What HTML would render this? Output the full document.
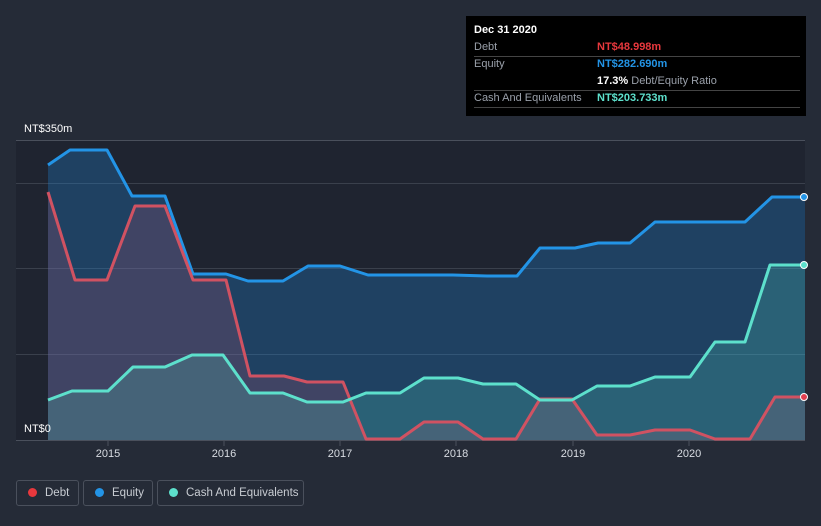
<!DOCTYPE html>
<html><head><style>
html,body{margin:0;width:821px;height:526px;overflow:hidden}
body{background:#252b37;font-family:"Liberation Sans",sans-serif;position:relative}
.tt{position:absolute;left:466px;top:16px;width:340px;height:100px;background:#000;color:#fff;font-size:11px}
.tt .r{position:absolute;left:8px;width:326px;border-bottom:1px solid #444;height:17px;line-height:17px}
.lab{color:#9aa0aa}
.v{position:absolute;left:123px;font-weight:bold}
.leg{position:absolute;top:480px;height:26px;border:1px solid #4a505c;border-radius:3px;color:#c8ccd2;font-size:11.5px;line-height:24px;box-sizing:border-box;white-space:nowrap}
.dot{display:inline-block;width:9px;height:9px;border-radius:50%;margin:0 8px 0 11px;vertical-align:-1px}
</style></head><body>
<svg width="821" height="526" style="position:absolute;left:0;top:0">
<rect x="16" y="140" width="789" height="300" fill="#1f2430"/>
<g stroke="#3a404c" stroke-width="1">
<line x1="16" y1="140.5" x2="805" y2="140.5" stroke="#4a505c"/>
<line x1="16" y1="183.5" x2="805" y2="183.5"/>
<line x1="16" y1="268.5" x2="805" y2="268.5"/>
<line x1="16" y1="354.5" x2="805" y2="354.5"/>
<line x1="16" y1="440.5" x2="805" y2="440.5" stroke="#4a505c"/>
</g>
<g stroke="#4a505c"><line x1="108" y1="440" x2="108" y2="446"/><line x1="224" y1="440" x2="224" y2="446"/><line x1="340" y1="440" x2="340" y2="446"/><line x1="456" y1="440" x2="456" y2="446"/><line x1="573" y1="440" x2="573" y2="446"/><line x1="689" y1="440" x2="689" y2="446"/></g>
<polygon fill="rgba(33,140,230,0.28)" points="48,440 48,165 70,150 107,150 132,196 165,196 193,274 226,274 248,281 283,281 308,266 340,266 368,275 453,275 487,276 517,276 540,248 575,248 598,243 630,243 655,222 690,222 745,222 772,197 805,197 805,440"/>
<polygon fill="rgba(200,80,110,0.2)" points="48,440 48,192 75,280 107,280 135,206 165,206 193,280 226,280 250,376 284,376 307,382 343,382 366,439 400,439 424,422 458,422 483,439 516,439 540,399 572,399 597,435 630,435 655,430 690,430 715,439 750,439 775,397 805,397 805,440"/>
<polygon fill="rgba(88,225,200,0.2)" points="48,440 48,400 72,391 108,391 133,367 165,367 192,355 223,355 250,393 283,393 307,402 343,402 366,393 400,393 424,378 458,378 483,384 516,384 540,400 572,400 597,386 630,386 655,377 690,377 715,342 745,342 770,265 805,265 805,440"/>
<g fill="none" stroke-width="3" stroke-linejoin="round">
<polyline stroke="#2394e6" points="48,165 70,150 107,150 132,196 165,196 193,274 226,274 248,281 283,281 308,266 340,266 368,275 453,275 487,276 517,276 540,248 575,248 598,243 630,243 655,222 690,222 745,222 772,197 805,197"/>
<polyline stroke="#d05262" points="48,192 75,280 107,280 135,206 165,206 193,280 226,280 250,376 284,376 307,382 343,382 366,439 400,439 424,422 458,422 483,439 516,439 540,399 572,399 597,435 630,435 655,430 690,430 715,439 750,439 775,397 805,397"/>
<polyline stroke="#5de0cc" points="48,400 72,391 108,391 133,367 165,367 192,355 223,355 250,393 283,393 307,402 343,402 366,393 400,393 424,378 458,378 483,384 516,384 540,400 572,400 597,386 630,386 655,377 690,377 715,342 745,342 770,265 805,265"/>
</g>
<circle cx="804" cy="197" r="3.5" fill="#2394e6" stroke="#fff"/>
<circle cx="804" cy="265" r="3.5" fill="#5de0cc" stroke="#fff"/>
<circle cx="804" cy="397" r="3.5" fill="#e04050" stroke="#fff"/>
<g fill="#fff" font-size="11" font-family="Liberation Sans">
<text x="24" y="132">NT$350m</text><text x="24" y="432">NT$0</text>
</g>
<g fill="#d8dce2" font-size="11" font-family="Liberation Sans" text-anchor="middle">
<text x="108" y="457">2015</text><text x="224" y="457">2016</text><text x="340" y="457">2017</text><text x="456" y="457">2018</text><text x="573" y="457">2019</text><text x="689" y="457">2020</text>
</g>
</svg>
<div class="tt">
<div style="position:absolute;left:8px;top:8px;font-weight:bold">Dec 31 2020</div>
<div class="r" style="top:23px"><span class="lab">Debt</span><span class="v" style="color:#e8383d">NT$48.998m</span></div>
<div class="r" style="top:40px;border:none"><span class="lab">Equity</span><span class="v" style="color:#2394e6">NT$282.690m</span></div>
<div class="r" style="top:57px"><span class="v">17.3% <span style="font-weight:normal;color:#9aa0aa">Debt/Equity Ratio</span></span></div>
<div class="r" style="top:74px"><span class="lab">Cash And Equivalents</span><span class="v" style="color:#5de0cc">NT$203.733m</span></div>
</div>
<div class="leg" style="left:16px;width:63px"><span class="dot" style="background:#e8383d"></span>Debt</div>
<div class="leg" style="left:83px;width:70px"><span class="dot" style="background:#2394e6"></span>Equity</div>
<div class="leg" style="left:157px;width:147px"><span class="dot" style="background:#5de0cc"></span>Cash And Equivalents</div>
</body></html>
